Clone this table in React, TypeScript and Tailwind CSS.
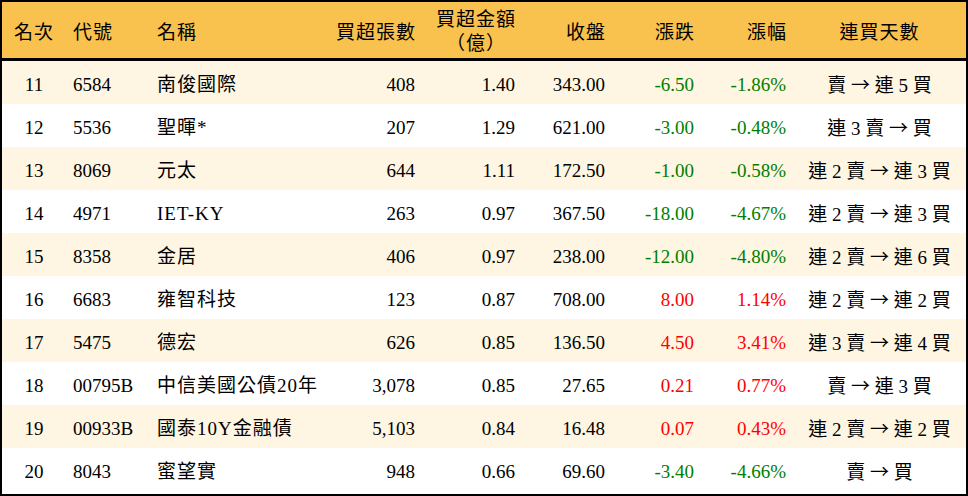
const ROWS = [
  { rank: 11, code: '6584', name: '南俊國際', vol: '408', amt: '1.40', close: '343.00', chg: '-6.50', pct: '-1.86%', from: '賣', to: '連 5 買' },
  { rank: 12, code: '5536', name: '聖暉*', vol: '207', amt: '1.29', close: '621.00', chg: '-3.00', pct: '-0.48%', from: '連 3 賣', to: '買' },
  { rank: 13, code: '8069', name: '元太', vol: '644', amt: '1.11', close: '172.50', chg: '-1.00', pct: '-0.58%', from: '連 2 賣', to: '連 3 買' },
  { rank: 14, code: '4971', name: 'IET-KY', vol: '263', amt: '0.97', close: '367.50', chg: '-18.00', pct: '-4.67%', from: '連 2 賣', to: '連 3 買' },
  { rank: 15, code: '8358', name: '金居', vol: '406', amt: '0.97', close: '238.00', chg: '-12.00', pct: '-4.80%', from: '連 2 賣', to: '連 6 買' },
  { rank: 16, code: '6683', name: '雍智科技', vol: '123', amt: '0.87', close: '708.00', chg: '8.00', pct: '1.14%', from: '連 2 賣', to: '連 2 買' },
  { rank: 17, code: '5475', name: '德宏', vol: '626', amt: '0.85', close: '136.50', chg: '4.50', pct: '3.41%', from: '連 3 賣', to: '連 4 買' },
  { rank: 18, code: '00795B', name: '中信美國公債20年', vol: '3,078', amt: '0.85', close: '27.65', chg: '0.21', pct: '0.77%', from: '賣', to: '連 3 買' },
  { rank: 19, code: '00933B', name: '國泰10Y金融債', vol: '5,103', amt: '0.84', close: '16.48', chg: '0.07', pct: '0.43%', from: '連 2 賣', to: '連 2 買' },
  { rank: 20, code: '8043', name: '蜜望實', vol: '948', amt: '0.66', close: '69.60', chg: '-3.40', pct: '-4.66%', from: '賣', to: '買' },
]

const COLS = 'grid grid-cols-[64px_84px_180px_92px_100px_90px_89px_92px_173px]'

export default function App() {
  return (
    <div className="w-[968px] h-[496px] bg-white font-['Liberation_Serif','Noto_Sans_CJK_TC',serif] text-[19px] text-black">
      <div className="border-2 border-black h-full flex flex-col">
        {/* header */}
        <div className={`${COLS} h-[59px] pt-[6px] bg-[#f9c14e] border-b-[3px] border-black items-center tracking-[1px]`}>
          <div className="text-center">名次</div>
          <div className="pl-[7px]">代號</div>
          <div className="pl-[7px]">名稱</div>
          <div className="pr-[6px] text-right">買超張數</div>
          <div className="pr-[6px] text-right">
            <span className="inline-block text-center leading-[24px]">買超金額<br />（億）</span>
          </div>
          <div className="pr-[6px] text-right">收盤</div>
          <div className="pr-[6px] text-right">漲跌</div>
          <div className="pr-[6px] text-right">漲幅</div>
          <div className="text-center">連買天數</div>
        </div>

        {ROWS.map((r, i) => {
          const up = !r.chg.startsWith('-')
          const tone = up ? 'text-[#ff0000]' : 'text-[#008000]'
          return (
            <div key={r.rank}
              className={`${COLS} h-[43px] pt-[6px] items-center ${i % 2 === 0 ? 'bg-[#fef5e2]' : 'bg-white'}`}>
              <div className="text-center">{r.rank}</div>
              <div className="pl-[7px]">{r.code}</div>
              <div className="pl-[7px] whitespace-nowrap tracking-[1px]">{r.name}</div>
              <div className="pr-[7px] text-right">{r.vol}</div>
              <div className="pr-[7px] text-right">{r.amt}</div>
              <div className="pr-[7px] text-right">{r.close}</div>
              <div className={`pr-[7px] text-right ${tone}`}>{r.chg}</div>
              <div className={`pr-[7px] text-right ${tone}`}>{r.pct}</div>
              <div className="text-center whitespace-pre">
                {r.from} <span className="font-['Noto_Sans_CJK_TC',sans-serif]">→</span> {r.to}
              </div>
            </div>
          )
        })}
      </div>
    </div>
  )
}
